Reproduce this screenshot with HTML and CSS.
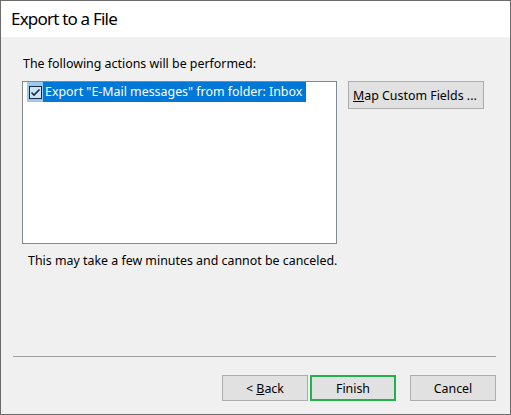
FILE: index.html
```html
<!DOCTYPE html>
<html>
<head>
<meta charset="utf-8">
<link rel="stylesheet" href="styles.css">
</head>
<body>
<div class="window">
  <div class="header">Export to a File</div>
  <div class="content">
    <div class="label">The following actions will be performed:</div>
    <div class="row">
      <div class="listbox">
        <div class="item">
          <span class="check">
            <svg width="13" height="13" viewBox="0 0 13 13"><rect x="0.5" y="0.5" width="12" height="12" fill="#cce4f7" stroke="#1b2a3a"/><polyline points="2.5,6.5 5,9 10.5,3.5" fill="none" stroke="#1b2a3a" stroke-width="1.6"/></svg>
          </span>
          <span class="item-text">Export "E-Mail messages" from folder: Inbox</span>
        </div>
      </div>
      <button class="btn map"><u>M</u>ap Custom Fields ...</button>
    </div>
    <div class="note">This may take a few minutes and cannot be canceled.</div>
  </div>
  <div class="footer">
    <div class="sep"></div>
    <div class="buttons">
      <button class="btn nav">&lt; <u>B</u>ack</button>
      <button class="btn nav finish">Finish</button>
      <button class="btn nav cancel">Cancel</button>
    </div>
  </div>
</div>
</body>
</html>
```

FILE: styles.css
```css
* { box-sizing: border-box; }
html, body { margin: 0; padding: 0; }
body {
  font-family: "Noto Sans", "Open Sans", sans-serif;
  font-size: 12.4px;
  color: #000;
}
.window {
  width: 511px;
  height: 415px;
  border: 1px solid #6b6b6b;
  background: #f0f0f0;
  display: flex;
  flex-direction: column;
}
.header {
  height: 36px;
  background: #fff;
  padding-left: 10px;
  font-size: 17px;
  letter-spacing: -0.8px;
  line-height: 36px;
  color: #000;
}
.content {
  flex: 1;
  padding: 19px 0 0 21px;
}
.label {
  line-height: 16px;
  padding-left: 1px;
}
.row {
  display: flex;
  align-items: flex-start;
  margin-top: 9px;
  gap: 11px;
}
.listbox {
  width: 315px;
  height: 163px;
  background: #fff;
  border: 1px solid #828790;
}
.item {
  display: flex;
  height: 20px;
  align-items: stretch;
}
.check {
  width: 16px;
  margin-left: 4px;
  background: #99c9ef;
  display: flex;
  align-items: center;
  justify-content: center;
}
.check svg { display: block; }
.item-text {
  background: #0078d7;
  color: #fff;
  padding: 0 4px 0 2px;
  line-height: 20px;
  white-space: nowrap;
}
.btn {
  font-family: inherit;
  font-size: 12.4px;
  color: #000;
  background: #e1e1e1;
  border: 1px solid #adadad;
  padding: 0;
  margin: 0;
}
.map {
  width: 136px;
  height: 28px;
  text-align: left;
  padding-left: 4px;
  white-space: nowrap;
}
.note {
  margin-top: 9px;
  padding-left: 6px;
  line-height: 16px;
}
.footer {
  padding: 0 14px 13px 12px;
}
.sep {
  height: 1px;
  background: #a0a0a0;
}
.buttons {
  display: flex;
  justify-content: flex-end;
  margin-top: 18px;
}
.nav {
  width: 86px;
  height: 26px;
}
.finish {
  margin-left: 2px;
  border: 2px solid #22b14c;
}
.cancel {
  margin-left: 14px;
}
```
